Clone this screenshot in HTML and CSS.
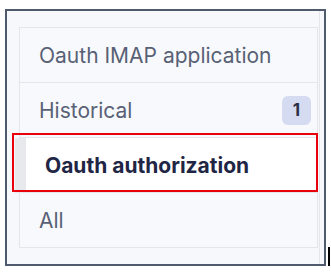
FILE: index.html
```html
<!DOCTYPE html>
<html lang="en">
<head>
    <meta charset="UTF-8">
    <meta name="viewport" content="width=device-width, initial-scale=1.0">
    <title>Folders</title>
    <link rel="stylesheet" href="styles.css">
</head>
<body>

    <!-- Window frame -->
    <div class="frame">
        <div class="panel">
            <ul class="folder-list">
                <li class="folder">Oauth IMAP application</li>
                <li class="folder">
                    <span>Historical</span>
                    <span class="badge">1</span>
                </li>
                <li class="folder active">Oauth authorization</li>
                <li class="folder">All</li>
            </ul>
        </div>
    </div>

    <!-- Annotation overlay -->
    <div class="highlight"></div>
    <div class="caret"></div>

</body>
</html>
```

FILE: styles.css
```css
body {
    margin: 0;
    background-color: #ffffff;
    font-family: Inter, "Noto Sans", sans-serif;
}

.frame {
    margin: 9px 0 0 5px;
    width: 317px;
    height: 253px;
    border: 2px solid #505a6d;
    background-color: #f7f8fb;
}

.panel {
    width: 313px;
    height: 100%;
    box-sizing: border-box;
    padding: 16px 0 0 12px;
    border-right: 1px solid #e4e6eb;
}

.folder-list {
    list-style: none;
    margin: 0;
    padding: 0;
    width: 299px;
    box-sizing: border-box;
    border: 1px solid #e4e6eb;
    background-color: #f8f9fc;
}

.folder {
    height: 54px;
    display: flex;
    align-items: center;
    justify-content: space-between;
    padding: 0 6px 0 19px;
    border-bottom: 1px solid #e4e6eb;
    font-size: 21px;
    color: #586175;
}

.folder:last-child {
    border-bottom: none;
}

.folder.active {
    margin-left: -5px;
    padding-left: 19px;
    border-left: 11px solid #e8e9ec;
    background-color: #ffffff;
    font-weight: 700;
    color: #1f2544;
}

.badge {
    width: 29px;
    height: 29px;
    display: flex;
    align-items: center;
    justify-content: center;
    border-radius: 6px;
    background-color: #d5dbf0;
    color: #2b3047;
    font-size: 17px;
    font-weight: 700;
}

.highlight {
    position: absolute;
    left: 12px;
    top: 133px;
    width: 302px;
    height: 55px;
    border: 2px solid #e8000b;
}

.caret {
    position: absolute;
    left: 328px;
    top: 247px;
    width: 2px;
    height: 19px;
    background-color: #000000;
}
```
